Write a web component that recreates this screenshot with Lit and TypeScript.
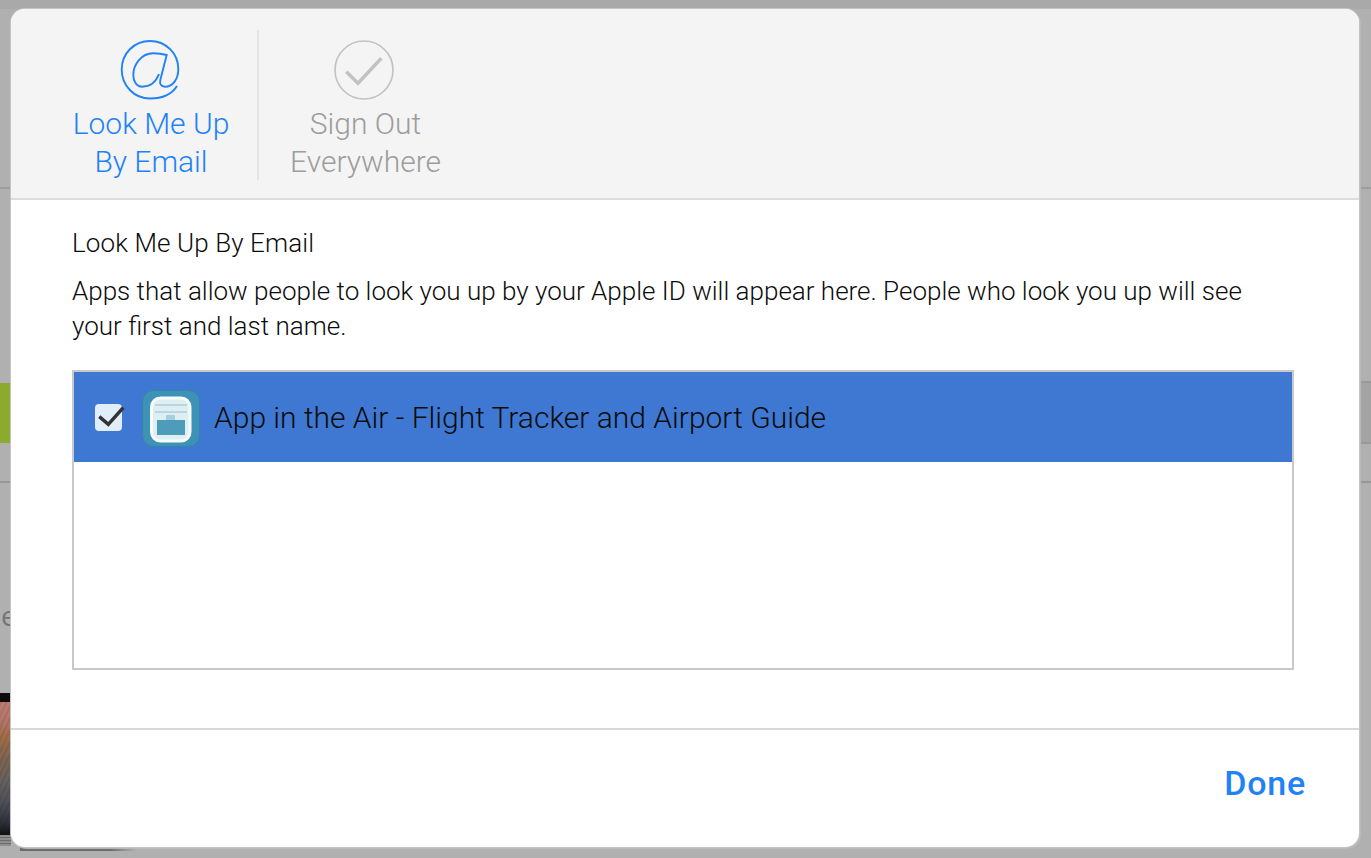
import { LitElement, html, css, svg } from 'lit';
import { customElement } from 'lit/decorators.js';

const atIcon = svg`<path d="M57 46C52 54 42 58.500 30 58.500 14 58.500 1.700 45.500 1.700 29.500 1.700 13.500 14 1 30 1c16 0 28.300 12.500 28.300 28 0 10-5.300 17.700-13.300 17.700-4 0-5.500-2.700-4.700-6.700L46.700 15c-3.700-1-8.700-1.700-13.400-1.700C21 13.300 13.300 25 13.300 35c0 7 3.700 11.700 8.700 11.700 8 0 14-4.700 17-12.700" fill="none" stroke="currentColor" stroke-width="1.900"/>`;

@customElement('app-root')
export class AppRoot extends LitElement {
	static styles = css`
		:host {
			display: block;
			position: relative;
			width: 1371px;
			height: 858px;
			overflow: hidden;
			background: #b0b0b0;
			font-family: Roboto, "Liberation Sans", sans-serif;
			font-weight: 300;
			color: #0c0c0c;
		}
		.back {
			position: absolute;
			left: 0;
			width: 11px;
		}
		.top-edge { top: 0; left: 0; width: 1371px; height: 9px; background: #a9a9a9; }
		.line-a { top: 187px; height: 2px; background: #9d9d9d; }
		.line-a-r { left: 1360px; top: 187px; height: 2px; background: #9d9d9d; }
		.green { top: 383px; height: 60px; background: #8cab2c; }
		.band { left: 1360px; top: 381px; height: 63px; background: #a3a3a3; border-top: 2px solid #999; border-bottom: 2px solid #999; box-sizing: border-box; }
		.line-b { top: 481px; height: 2px; background: #979797; }
		.line-b-r { left: 1360px; top: 481px; height: 2px; background: #979797; }
		.letter { left: 1px; width: auto; top: 601px; font: 400 28px "Open Sans", sans-serif; color: #757575; line-height: 28px; }
		.black { top: 693px; height: 9px; background: #0c0c0c; }
		.photo {
			top: 702px;
			height: 133px;
			background:
				repeating-linear-gradient(115deg, rgba(0, 0, 0, .08) 0 2px, transparent 2px 5px),
				linear-gradient(#bd7a72 0, #b4766a 14%, #a06c48 26%, #7f6450 42%, #65605f 60%, #4c4e58 76%, #2f323c 90%, #121212 100%);
		}
		.stand { top: 835px; height: 11px; background: repeating-linear-gradient(#8e8e8e 0 2px, #6c6c6c 2px 3px); }
		.shadow {
			left: 20px;
			top: 847px;
			width: 116px;
			height: 4px;
			background: linear-gradient(to right, #6a6a6a 78%, transparent);
		}
		.modal {
			position: absolute;
			inset: 9px 12px 11px 11px;
			display: flex;
			flex-direction: column;
			background: #fff;
			border-radius: 14px;
			overflow: hidden;
			box-shadow: 0 0 0 1px #c4c4c4, 1px 1px 1px 1px #bbb;
		}
		.tabs {
			display: flex;
			height: 191px;
			flex: none;
			box-sizing: border-box;
			background: #f4f4f4;
			border-bottom: 2px solid #dcdcdc;
			padding: 21px 0 18px 0;
		}
		.tab {
			display: flex;
			flex-direction: column;
			align-items: center;
			box-sizing: border-box;
			font-size: 30px;
			line-height: 38px;
			text-align: center;
		}
		.tab svg { display: block; flex: none; width: 60px; height: 60px; margin: 10px 0 5px; overflow: visible; }
		.tab.on {
			width: 248px;
			padding-left: 34px;
			border-right: 2px solid #e4e4e4;
			color: #1f82f6;
		}
		.tab.on svg { margin-right: 2px; }
		.tab.off {
			width: 213px;
			color: #9d9d9d;
		}
		.tab.off svg { margin-right: 3px; }
		.body {
			flex: 1;
			padding: 29px 65px 0 61px;
		}
		.title { font-size: 26px; letter-spacing: .1px; line-height: 29px; }
		.desc { font-size: 26px; line-height: 35px; margin: 16px 0 0; }
		.list {
			margin-top: 26px;
			height: 300px;
			box-sizing: border-box;
			border: 2px solid #c9c9c9;
		}
		.row {
			display: flex;
			align-items: center;
			height: 90px;
			padding-left: 21px;
			background: #3e78d2;
			font-size: 30px;
		}
		.check {
			width: 27px;
			height: 27px;
			flex: none;
			border-radius: 4px;
			background: #e2edfa;
			margin-right: 20px;
		}
		.check svg { display: block; overflow: visible; }
		.app { width: 58px; height: 58px; flex: none; margin: 4px 14px 0 0; }
		.app svg { display: block; }
		.foot {
			flex: none;
			height: 119px;
			box-sizing: border-box;
			border-top: 2px solid #d8d8d8;
			display: flex;
			justify-content: flex-end;
			padding: 33px 53px 0 0;
		}
		.done {
			font-size: 34px;
			letter-spacing: .8px;
			line-height: 40px;
			font-weight: 500;
			color: #1f82f6;
		}
	`;

	render() {
		return html`
			<div class="back top-edge"></div>
			<div class="back line-a"></div>
			<div class="back line-a-r"></div>
			<div class="back green"></div>
			<div class="back band"></div>
			<div class="back line-b"></div>
			<div class="back line-b-r"></div>
			<div class="back letter">e</div>
			<div class="back black"></div>
			<div class="back photo"></div>
			<div class="back stand"></div>
			<div class="back shadow"></div>
			<div class="modal">
				<div class="tabs">
					<div class="tab on">
						<svg viewBox="0 0 60 60">${atIcon}</svg>
						<div>Look Me Up<br />By Email</div>
					</div>
					<div class="tab off">
						<svg viewBox="0 0 60 60">
							<circle cx="30" cy="30" r="29" fill="none" stroke="#c2c2c2" stroke-width="1.700" />
							<path d="M12.300 31.700L24 43.300 47.300 18.300" fill="none" stroke="#c2c2c2" stroke-width="3.500" />
						</svg>
						<div>Sign Out<br />Everywhere</div>
					</div>
				</div>
				<div class="body">
					<div class="title">Look Me Up By Email</div>
					<p class="desc">Apps that allow people to look you up by your Apple ID will appear here. People who look you up will see your first and last name.</p>
					<div class="list">
						<div class="row">
							<div class="check">
								<svg viewBox="0 0 27 27" width="27" height="27">
									<path d="M4.300 12.700l9 7.600L28.300 3.700" fill="none" stroke="#333" stroke-width="3.500" />
								</svg>
							</div>
							<div class="app">
								<svg viewBox="0 0 58 58" width="58" height="58">
									<rect x=".5" y=".5" width="57" height="56" rx="11" fill="#3d93b5" stroke="#3585a8" />
									<rect x="9.500" y="8" width="38.500" height="43" rx="9" fill="#dfeef3" stroke="#f6fbfc" stroke-width="3" />
									<path d="M13 15h32M13 22h32" stroke="#b7d7e3" stroke-width="2" />
									<rect x="24" y="25" width="9" height="5" fill="#a8cfdd" />
									<rect x="15" y="30" width="28" height="15" fill="#4d9cb9" />
								</svg>
							</div>
							<span>App in the Air - Flight Tracker and Airport Guide</span>
						</div>
					</div>
				</div>
				<div class="foot"><div class="done">Done</div></div>
			</div>
		`;
	}
}
